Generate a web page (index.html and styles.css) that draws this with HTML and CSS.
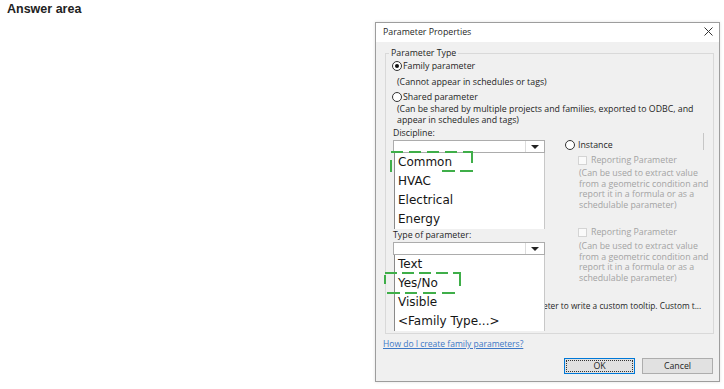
FILE: index.html
```html
<!DOCTYPE html>
<html lang="en">
<head>
  <meta charset="UTF-8" />
  <title>Parameter Properties</title>
  <link rel="stylesheet" href="styles.css">
</head>
<body>

  <div class="answer">Answer area</div>

  <div class="dialog">
    <div class="titlebar">
      <span>Parameter Properties</span>
      <svg class="close" width="9" height="9" viewBox="0 0 9 9">
        <path d="M0.5 0.5 L8.5 8.5 M8.5 0.5 L0.5 8.5" stroke="#333" stroke-width="1" fill="none"/>
      </svg>
    </div>

    <div class="dlg-body">
      <fieldset class="group">
        <legend>Parameter Type</legend>

        <div class="opt"><span class="radio checked"></span>Family parameter</div>
        <div class="desc first">(Cannot appear in schedules or tags)</div>
        <div class="opt shared"><span class="radio"></span>Shared parameter</div>
        <div class="desc">(Can be shared by multiple projects and families, exported to ODBC, and<br>appear in schedules and tags)</div>

        <div class="data">
          <div class="left">
            <div class="lbl">Discipline:</div>
            <div class="combo">
              <span class="arrow"></span>
              <ul class="list">
                <li>Common</li>
                <li>HVAC</li>
                <li>Electrical</li>
                <li>Energy</li>
              </ul>
            </div>

            <div class="lbl type-lbl">Type of parameter:</div>
            <div class="combo">
              <span class="arrow"></span>
              <ul class="list">
                <li>Text</li>
                <li>Yes/No</li>
                <li>Visible</li>
                <li>&lt;Family Type...&gt;</li>
              </ul>
            </div>
          </div>

          <div class="right">
            <span class="vline"></span>
            <div class="opt inst"><span class="radio"></span>Instance</div>

            <div class="report first-rep"><span class="check"></span>Reporting Parameter</div>
            <div class="rdesc">(Can be used to extract value<br>from a geometric condition and<br>report it in a formula or as a<br>schedulable parameter)</div>

            <div class="report second-rep"><span class="check"></span>Reporting Parameter</div>
            <div class="rdesc">(Can be used to extract value<br>from a geometric condition and<br>report it in a formula or as a<br>schedulable parameter)</div>
          </div>
        </div>

        <div class="tip">eter to write a custom tooltip. Custom t...</div>
      </fieldset>

      <a class="help" href="#">How do I create family parameters?</a>

      <div class="buttons">
        <button class="btn ok">OK</button>
        <button class="btn">Cancel</button>
      </div>
    </div>
  </div>

  <!-- answer markers -->
  <svg class="marks" width="724" height="389" viewBox="0 0 724 389">
    <g stroke="#3fae49" stroke-width="2" fill="none">
      <path d="M391 152H403 M409 152H421 M427 152H439 M445 152H457 M463 152H473 M472 152V163 M442 171H455 M460 171H473 M391 160V172"/>
      <path d="M385 273H397 M402 273H414 M419 273H431 M436 273H448 M453 273H461 M460 273V286 M387 293H400 M405 293H417 M423 293H436 M442 293H455 M385 275V284"/>
    </g>
  </svg>

</body>
</html>
```

FILE: styles.css
```css
body {
  margin: 0;
  width: 724px;
  height: 389px;
  overflow: hidden;
  position: relative;
  background-color: #fff;
  font-family: "Open Sans", sans-serif;
  font-size: 8.8px;
  color: #1f1f1f;
}

.answer {
  height: 20px;
  padding: 2px 0 0 7px;
  line-height: 14px;
  font-family: "Liberation Sans", Arial, sans-serif;
  font-size: 12.5px;
  font-weight: bold;
  color: #222;
}

.dialog {
  margin-left: 375px;
  width: 343px;
  height: 358px;
  border: 1px solid #9d9d9d;
  background-color: #f0f0f0;
  box-shadow: 0 0 3px rgba(0,0,0,0.12);
  display: flex;
  flex-direction: column;
}

.titlebar {
  height: 17px;
  padding: 0 6px 2px 7px;
  background-color: #fff;
  display: flex;
  align-items: center;
  justify-content: space-between;
}

.dlg-body {
  flex: 1;
  display: flex;
  flex-direction: column;
}

.group {
  margin: 5px 5px 0 9px;
  padding: 1px 0 21px 0;
  border: 1px solid #d9d9d9;
  min-width: 0;
}

.group legend {
  margin-left: 3px;
  padding: 0 2px;
  line-height: 12px;
}

.opt {
  height: 12px;
  padding-left: 6px;
  display: flex;
  align-items: center;
  gap: 1px;
}

.opt.shared {
  margin-top: 4px;
}

.radio {
  width: 8px;
  height: 8px;
  border: 1px solid #333;
  border-radius: 50%;
  background-color: #fff;
  display: flex;
  align-items: center;
  justify-content: center;
}

.radio.checked::after {
  content: "";
  width: 4px;
  height: 4px;
  border-radius: 50%;
  background-color: #111;
}

.desc {
  padding-left: 11px;
  margin-top: 1px;
  line-height: 11px;
  white-space: nowrap;
}

.desc.first {
  margin-top: 5px;
  line-height: 10px;
}

.data {
  display: grid;
  grid-template-columns: 179px 1fr;
}

.left {
  padding-left: 7px;
}

.lbl {
  margin-top: 1px;
  line-height: 12px;
}

.type-lbl {
  margin-top: 76px;
}

.combo {
  position: relative;
  margin-top: 1px;
  width: 150px;
  height: 11px;
  border: 1px solid #acacac;
  background-color: #fff;
}

.arrow {
  position: absolute;
  right: 0;
  top: 0;
  width: 18px;
  height: 11px;
  border-left: 1px solid #dcdcdc;
  display: flex;
  align-items: center;
  justify-content: center;
}

.arrow::after {
  content: "";
  border-left: 4px solid transparent;
  border-right: 4px solid transparent;
  border-top: 4px solid #222;
}

.list {
  position: absolute;
  left: 0;
  top: 12px;
  width: 149px;
  margin: 0;
  padding: 0;
  list-style: none;
  background-color: #fff;
  border-left: 1px solid #8a8a8a;
  border-right: 1px solid #c8c8c8;
  z-index: 2;
}

.list li {
  height: 19px;
  line-height: 19px;
  padding-left: 3px;
  font-family: "DejaVu Sans", Verdana, sans-serif;
  font-size: 12px;
  color: #151515;
}

.right {
  position: relative;
  color: #a3a3a3;
}

.vline {
  position: absolute;
  left: 138px;
  top: 7px;
  height: 17px;
  border-left: 1px solid #c6c6c6;
}

.opt.inst {
  margin-top: 13px;
  padding-left: 0;
  gap: 3px;
  color: #1f1f1f;
}

.report {
  height: 12px;
  padding-left: 13px;
  display: flex;
  align-items: center;
  gap: 4px;
  margin-top: 3px;
}

.report.second-rep {
  margin-top: 16px;
}

.check {
  width: 7px;
  height: 7px;
  border: 1px solid #d4d4d4;
  background-color: #fafafa;
}

.rdesc {
  margin-top: 2px;
  padding-left: 14px;
  line-height: 10.5px;
  white-space: nowrap;
}

.second-rep + .rdesc {
  margin-top: 3px;
}

.tip {
  margin-top: 17px;
  padding-left: 157px;
  line-height: 12px;
  font-size: 8.3px;
  white-space: nowrap;
  overflow: hidden;
}

.help {
  margin: 4px 0 0 7px;
  line-height: 12px;
  font-size: 8.5px;
  color: #3d78c6;
  align-self: flex-start;
}

.buttons {
  margin-top: 8px;
  padding-right: 6px;
  display: flex;
  justify-content: flex-end;
  gap: 7px;
}

.btn {
  width: 71px;
  height: 16px;
  padding: 0;
  border: 1px solid #adadad;
  background-color: #e1e1e1;
  font-family: "Open Sans", sans-serif;
  font-size: 8.8px;
  color: #1f1f1f;
}

.btn.ok {
  border-color: #0078d7;
  outline: 1px dotted #333;
  outline-offset: -3px;
}

.marks {
  position: absolute;
  left: 0;
  top: 0;
  pointer-events: none;
  z-index: 5;
}
```
